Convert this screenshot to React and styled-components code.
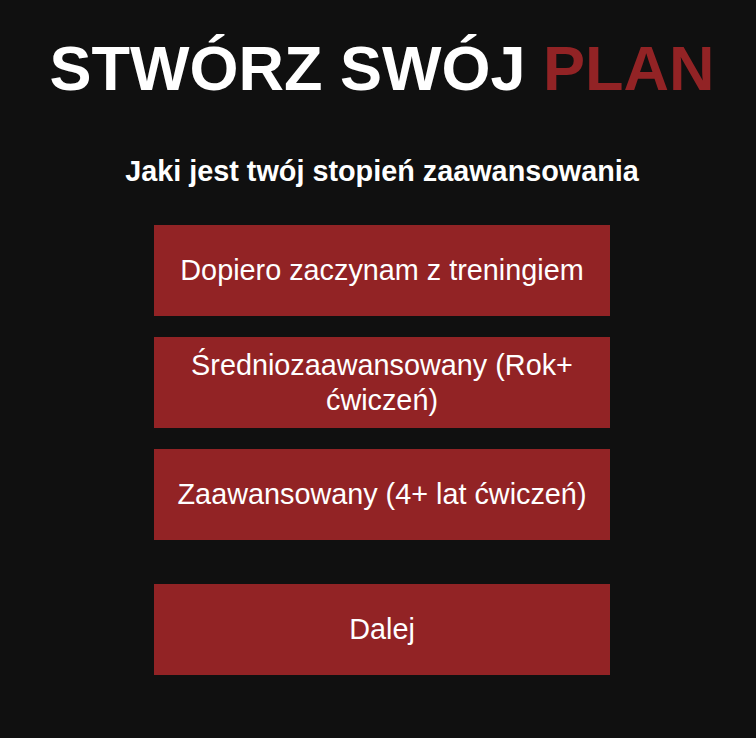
import React, { useState } from "react";
import styled, { createGlobalStyle } from "styled-components";

const GlobalStyle = createGlobalStyle`
  html, body {
    margin: 0;
    background: #101010;
    font-family: "Liberation Sans", Arial, sans-serif;
  }
`;

const Page = styled.div`
  min-height: 738px;
  display: flex;
  flex-direction: column;
  align-items: center;
  padding: 26px 0 0 8px;
  box-sizing: border-box;
  color: #fff;
`;

const Title = styled.h1`
  margin: 0;
  font-size: 63px;
  font-weight: bold;
  line-height: 84px;
`;

const Accent = styled.span`
  color: #922325;
`;

const Question = styled.h2`
  margin: 44px 0 0;
  font-size: 28.8px;
  font-weight: bold;
  line-height: 34px;
`;

const Options = styled.div`
  display: flex;
  flex-direction: column;
  gap: 21px;
  margin-top: 37px;
`;

const OptionButton = styled.button`
  width: 456px;
  height: 91px;
  padding: 0 20px;
  border: none;
  background: ${(p) => (p.$active ? "#a82a2c" : "#922325")};
  color: #fff;
  font-family: "Liberation Sans", Arial, sans-serif;
  font-size: 28.8px;
  line-height: 35px;
  cursor: pointer;
`;

const NextButton = styled(OptionButton)`
  margin-top: 44px;
`;

const levels = [
  "Dopiero zaczynam z treningiem",
  "Średniozaawansowany (Rok+ ćwiczeń)",
  "Zaawansowany (4+ lat ćwiczeń)",
];

export default function App() {
  const [picked, setPicked] = useState(null);

  return (
    <Page>
      <GlobalStyle />
      <Title>
        STWÓRZ SWÓJ <Accent>PLAN</Accent>
      </Title>
      <Question>Jaki jest twój stopień zaawansowania</Question>
      <Options>
        {levels.map((level, i) => (
          <OptionButton
            key={level}
            $active={picked === i}
            onClick={() => setPicked(i)}
          >
            {level}
          </OptionButton>
        ))}
      </Options>
      <NextButton>Dalej</NextButton>
    </Page>
  );
}
